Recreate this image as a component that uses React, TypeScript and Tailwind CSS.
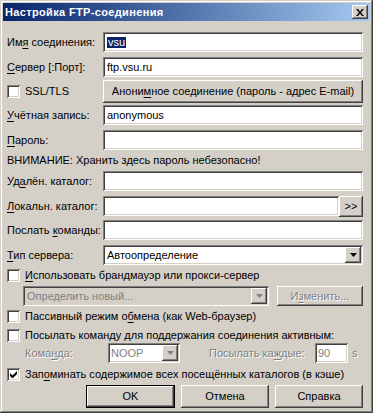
import React from 'react';

const sunken = 'shadow-[inset_1px_1px_0_#808080,inset_-1px_-1px_0_#ffffff,inset_2px_2px_0_#404040,inset_-2px_-2px_0_#d4d0c8]';
const raised = 'shadow-[inset_-1px_-1px_0_#404040,inset_1px_1px_0_#ffffff,inset_-2px_-2px_0_#808080,inset_2px_2px_0_#d4d0c8]';
const disabledText = 'text-[#808080] [text-shadow:1px_1px_0_#ffffff]';

const U: React.FC<{ children: React.ReactNode }> = ({ children }) => <span className="underline underline-offset-2">{children}</span>;

const Field: React.FC<{ children?: React.ReactNode; className?: string }> = ({ children, className = '' }) => (
  <div className={`h-[20px] bg-white ${sunken} flex items-center pl-[4px] ${className}`}>{children}</div>
);

const Arrow: React.FC<{ disabled?: boolean }> = ({ disabled }) => (
  <div className={`w-[16px] h-[16px] mr-[2px] bg-[#d4d0c8] ${raised} flex items-center justify-center`}>
    <svg width="7" height="4" viewBox="0 0 7 4">
      <path d="M0 0h7L3.5 4z" fill={disabled ? '#808080' : '#000'} />
    </svg>
  </div>
);

const Checkbox: React.FC<{ checked?: boolean }> = ({ checked }) => (
  <div className={`w-[13px] h-[13px] shrink-0 bg-white ${sunken} flex items-center justify-center`}>
    {checked && (
      <svg width="7" height="7" viewBox="0 0 7 7">
        <path d="M0 2v3l2 2h1l4-4V0L2.5 4.5z" fill="#000" />
      </svg>
    )}
  </div>
);

const Row: React.FC<{ label: React.ReactNode; className?: string; children: React.ReactNode }> = ({ label, className = '', children }) => (
  <div className={`flex items-center h-[20px] ${className}`}>
    <div className="w-[96px] shrink-0">{label}</div>
    {children}
  </div>
);

const CheckRow: React.FC<{ checked?: boolean; className?: string; children: React.ReactNode }> = ({ checked, className = '', children }) => (
  <div className={`flex items-center h-[16px] ${className}`}>
    <Checkbox checked={checked} />
    <span className="ml-[5px]">{children}</span>
  </div>
);

export default function App() {
  return (
    <div
      className={`w-[373px] h-[413px] bg-[#d4d0c8] p-[3px] text-[11px] leading-none text-black shadow-[inset_-1px_-1px_0_#404040,inset_1px_1px_0_#d4d0c8,inset_-2px_-2px_0_#808080,inset_2px_2px_0_#ffffff] overflow-hidden`}
      style={{ fontFamily: '"Liberation Sans", Arial, sans-serif' }}
    >
      {/* Title bar */}
      <div className="h-[18px] bg-linear-to-r from-[#0a246a] to-[#a6caf0] flex items-center pl-[2px] pr-[2px]">
        <span className="text-white font-bold text-[11px] tracking-[0.35px]">Настройка FTP-соединения</span>
        <div className={`ml-auto w-[16px] h-[14px] bg-[#d4d0c8] ${raised} flex items-center justify-center`}>
          <svg width="8" height="7" viewBox="0 0 8 7">
            <path d="M0 0h2l2 2.5L6 0h2L5 3.5 8 7H6L4 4.5 2 7H0l3-3.5z" fill="#000" />
          </svg>
        </div>
      </div>

      <div className="pl-[4px] pr-[7px]">
        <Row label={<>Им<U>я</U> соединения:</>} className="mt-[11px]">
          <Field className="flex-1">
            <span className="bg-[#0a246a] text-white px-px">vsu</span>
          </Field>
        </Row>

        <Row label={<><U>С</U>ервер [:Порт]:</>} className="mt-[5px]">
          <Field className="flex-1">ftp.vsu.ru</Field>
        </Row>

        <div className="flex items-center h-[23px] mt-[3px]">
          <div className="w-[96px] shrink-0 flex items-center">
            <Checkbox />
            <span className="ml-[5px]">SSL/TLS</span>
          </div>
          <div className={`flex-1 h-[23px] ${raised} flex items-center justify-center`}>
            Анони<U>м</U>ное соединение (пароль - адрес E-mail)
          </div>
        </div>

        <Row label={<><U>У</U>чётная запись:</>} className="mt-[2px]">
          <Field className="flex-1">anonymous</Field>
        </Row>

        <Row label={<><U>П</U>ароль:</>} className="mt-[5px]">
          <Field className="flex-1" />
        </Row>

        <div className="h-[17px] mt-[2px] flex items-center">ВНИМАНИЕ: Хранить здесь пароль небезопасно!</div>

        <Row label={<>Уд<U>а</U>лён. каталог:</>} className="mt-[2px]">
          <Field className="flex-1" />
        </Row>

        <div className="flex items-center h-[21px] mt-[5px]">
          <div className="w-[96px] shrink-0"><U>Л</U>окальн. каталог:</div>
          <Field className="flex-1 self-start" />
          <div className={`w-[24px] h-[21px] ${raised} flex items-center justify-center`}>&gt;&gt;</div>
        </div>

        <Row label={<>Послать <U>к</U>оманды:</>} className="mt-[3px]">
          <Field className="flex-1" />
        </Row>

        <Row label={<><U>Т</U>ип сервера:</>} className="mt-[5px]">
          <Field className="flex-1 justify-between">
            <span>Автоопределение</span>
            <Arrow />
          </Field>
        </Row>

        <CheckRow className="mt-[2px]"><U>И</U>спользовать брандмауэр или прокси-сервер</CheckRow>

        <div className="flex items-center h-[20px] mt-[3px] pl-[16px]">
          <div className={`w-[246px] h-[20px] bg-[#d4d0c8] ${sunken} flex items-center justify-between pl-[4px]`}>
            <span className="text-[#808080]">Определить новый...</span>
            <Arrow disabled />
          </div>
          <div className={`ml-auto w-[86px] h-[20px] ${raised} flex items-center justify-center ${disabledText}`}>
            И<U>з</U>менить...
          </div>
        </div>

        <CheckRow className="mt-[2px]">Пассивный режим о<U>б</U>мена (как Web-браузер)</CheckRow>

        <CheckRow className="mt-[3px]">Посылать коман<U>д</U>у для поддержания соединения активным:</CheckRow>

        <div className="flex items-center h-[20px] pl-[18px]">
          <div className={`w-[83px] shrink-0 ${disabledText}`}>Кома<U>н</U>да:</div>
          <Field className="w-[72px] justify-between !pl-[3px]">
            <span className="text-[#808080]">NOOP</span>
            <Arrow disabled />
          </Field>
          <div className={`ml-[29px] w-[106px] shrink-0 ${disabledText}`}>Посылать ка<U>ж</U>дые:</div>
          <Field className="w-[33px] !pl-[3px]">
            <span className="text-[#808080]">90</span>
          </Field>
          <span className={`ml-[4px] ${disabledText}`}>s</span>
        </div>

        <CheckRow checked className="mt-[3px]">Зап<U>о</U>минать содержимое всех посещённых каталогов (в кэше)</CheckRow>

        <div className="flex justify-end gap-[6px] h-[23px] mt-[3px]">
          <div className="w-[89px] h-[23px] flex items-center justify-center shadow-[inset_0_0_0_1px_#000,inset_-2px_-2px_0_#404040,inset_2px_2px_0_#ffffff,inset_-3px_-3px_0_#808080]">
            OK
          </div>
          <div className={`w-[88px] h-[23px] ${raised} flex items-center justify-center`}>Отмена</div>
          <div className={`w-[88px] h-[23px] ${raised} flex items-center justify-center`}>Справка</div>
        </div>
      </div>
    </div>
  );
}
